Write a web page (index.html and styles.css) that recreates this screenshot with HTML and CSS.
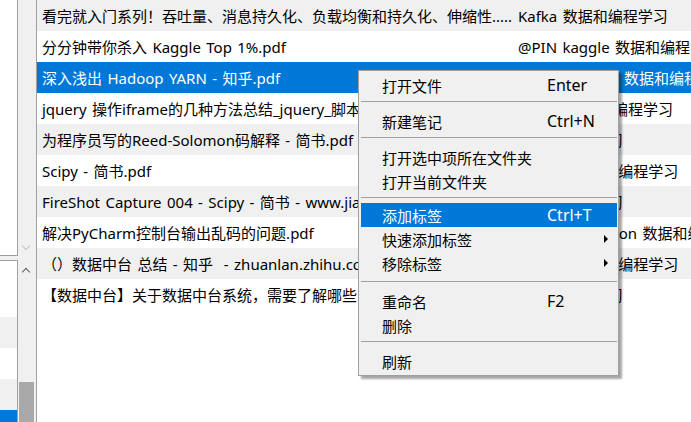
FILE: index.html
```html
<!DOCTYPE html>
<html lang="zh-CN">
<head>
<meta charset="utf-8">
<link rel="stylesheet" href="styles.css">
</head>
<body>
<div class="app">
  <div class="side">
    <div class="pane pane-top">
      <div class="plist"></div>
      <div class="sbar"><span class="arr arr-down"></span></div>
    </div>
    <div class="pane pane-bottom">
      <div class="plist">
        <div class="prow first"></div>
        <div class="prow"></div>
        <div class="prow alt"></div>
        <div class="prow"></div>
        <div class="prow alt"></div>
        <div class="prow sel"></div>
      </div>
      <div class="sbar"><span class="arr arr-up"></span><span class="thumb"></span></div>
    </div>
  </div>
  <div class="list">
    <div class="row alt"><span class="title">看完就入门系列！吞吐量、消息持久化、负载均衡和持久化、伸缩性.....</span><span class="tag">Kafka 数据和编程学习</span></div>
    <div class="row"><span class="title">分分钟带你杀入 Kaggle Top 1%.pdf</span><span class="tag">@PIN kaggle 数据和编程学习</span></div>
    <div class="row sel"><span class="title">深入浅出 Hadoop YARN - 知乎.pdf</span><span class="tag">@PIN Hadoop 数据和编程学习</span></div>
    <div class="row"><span class="title">jquery 操作iframe的几种方法总结_jquery_脚本之家.pdf</span><span class="tag">jquery 数据和编程学习</span></div>
    <div class="row alt"><span class="title">为程序员写的Reed-Solomon码解释 - 简书.pdf</span><span class="tag">数据和编程学习</span></div>
    <div class="row"><span class="title">Scipy - 简书.pdf</span><span class="tag">Python 数据和编程学习</span></div>
    <div class="row alt"><span class="title">FireShot Capture 004 - Scipy - 简书 - www.jianshu.com.pdf</span><span class="tag">数据和编程学习</span></div>
    <div class="row"><span class="title">解决PyCharm控制台输出乱码的问题.pdf</span><span class="tag">PyCharm python 数据和编程学习</span></div>
    <div class="row alt"><span class="title">（）数据中台 总结 - 知乎&nbsp; - zhuanlan.zhihu.com.pdf</span><span class="tag">Python 数据和编程学习</span></div>
    <div class="row"><span class="title">【数据中台】关于数据中台系统，需要了解哪些.pdf</span><span class="tag">数据和编程学习</span></div>
  </div>
</div>

<div class="menu">
  <div class="mi"><span class="ml">打开文件</span><span class="ms">Enter</span></div>
  <div class="sep"></div>
  <div class="mi"><span class="ml">新建笔记</span><span class="ms">Ctrl+N</span></div>
  <div class="sep"></div>
  <div class="mi"><span class="ml">打开选中项所在文件夹</span></div>
  <div class="mi"><span class="ml">打开当前文件夹</span></div>
  <div class="sep sep-s"></div>
  <div class="mi hot"><span class="ml">添加标签</span><span class="ms">Ctrl+T</span></div>
  <div class="mi sub"><span class="ml">快速添加标签</span></div>
  <div class="mi sub"><span class="ml">移除标签</span></div>
  <div class="sep sep-l"></div>
  <div class="mi"><span class="ml">重命名</span><span class="ms">F2</span></div>
  <div class="mi"><span class="ml">删除</span></div>
  <div class="sep"></div>
  <div class="mi"><span class="ml">刷新</span></div>
</div>
</body>
</html>
```

FILE: styles.css
```css
* { box-sizing: border-box; }
html, body { margin: 0; padding: 0; }
body {
  width: 691px;
  height: 422px;
  overflow: hidden;
  background: #fff;
  font-family: "Noto Sans", "Noto Sans CJK SC", sans-serif;
  font-size: 15px;
  color: #000;
  position: relative;
}
.app { display: flex; height: 422px; }

.side {
  width: 37px;
  flex: none;
  display: flex;
  flex-direction: column;
  border-right: 1px solid #a0a0a0;
  background: #f0f0f0;
  overflow: hidden;
}
.pane { display: flex; }
.pane-top { height: 256px; flex: none; }
.pane-bottom { margin-top: 4px; flex: 1; min-height: 0; overflow: hidden; }
.plist {
  width: 18px;
  flex: none;
  background: #fff;
  border-right: 1px solid #a0a0a0;
}
.pane-top .plist { border-bottom: 1px solid #a0a0a0; }
.pane-bottom .plist { border-top: 1px solid #a0a0a0; overflow: hidden; }
.prow { height: 31px; }
.prow.first { height: 25px; }
.prow.alt { background: #f0f0f0; }
.prow.sel { background: #0078d7; }
.sbar {
  width: 18px;
  flex: none;
  position: relative;
  background: #f0f0f0;
}
.arr {
  position: absolute;
  left: 5px;
  width: 6px;
  height: 6px;
  border-left: 1.5px solid;
  border-top: 1.5px solid;
}
.arr-down { top: 243px; transform: rotate(225deg); color: #c4c4c4; }
.arr-up { top: 9px; transform: rotate(45deg); color: #606060; }
.thumb {
  position: absolute;
  left: 1px;
  width: 15px;
  top: 122px;
  height: 60px;
  background: #a8a8a8;
}

.list { flex: 1; overflow: hidden; word-spacing: 1.5px; }
.row {
  height: 31px;
  display: flex;
  align-items: center;
  white-space: nowrap;
}
.row.alt { background: #f0f0f0; }
.row.sel { background: #0078d7; color: #fff; }
.title {
  width: 476px;
  flex: none;
  padding-left: 5px;
  overflow: hidden;
}
.tag { padding-left: 5px; }

.menu {
  position: absolute;
  left: 358px;
  top: 70px;
  width: 261px;
  height: 306px;
  background: #f0f0f0;
  border: 1px solid #a0a0a0;
  padding: 2px 1px 2px 2px;
  box-shadow: 3px 3px 2px rgba(0, 0, 0, 0.35);
  font-size: 15px;
}
.mi {
  height: 24px;
  display: flex;
  align-items: center;
  position: relative;
  padding-left: 21px;
}
.mi.hot { background: #0078d7; color: #fff; }
.ml { width: 165px; }
.ms { font-size: 16px; }
.sub::after {
  content: "";
  position: absolute;
  left: 243px;
  top: 8px;
  border-left: 4px solid #000;
  border-top: 4px solid transparent;
  border-bottom: 4px solid transparent;
}
.sep {
  height: 1px;
  margin: 4px 0 7px;
  background: #a0a0a0;
}
.sep-s { margin: 4px 0 5px; }
.sep-l { margin: 6px 0 7px; }
```
